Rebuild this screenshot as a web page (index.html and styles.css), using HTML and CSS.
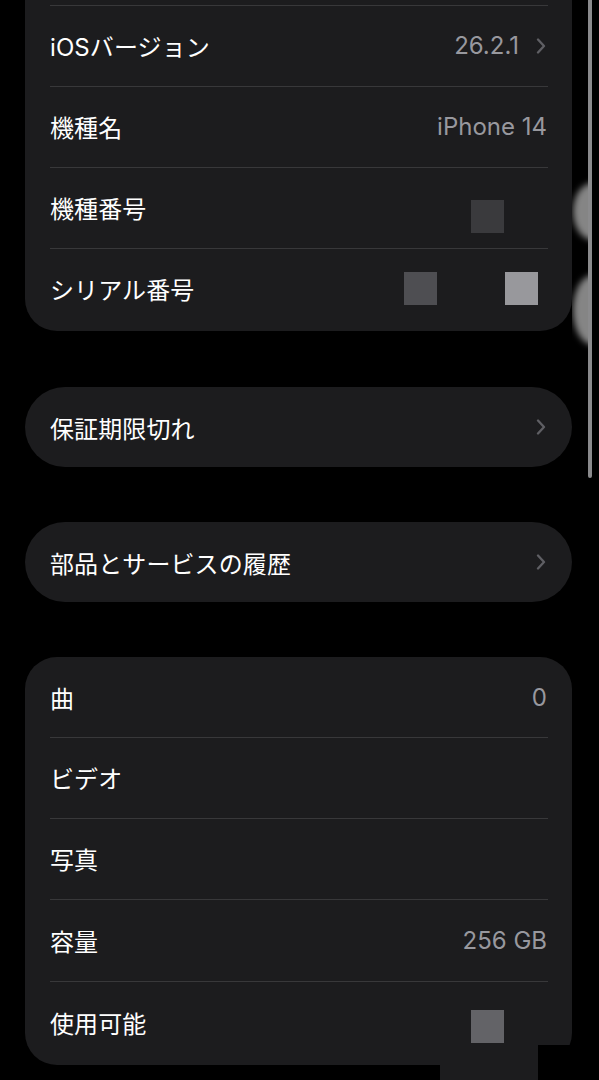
FILE: index.html
```html
<!DOCTYPE html>
<html lang="ja">
<head>
<meta charset="utf-8">
<link rel="stylesheet" href="styles.css">
</head>
<body>
<div class="page">
  <section class="card card-top">
    <div class="row r81 sep-top">
      <span class="label">iOSバージョン</span>
      <span class="value">26.2.1<svg class="chev" viewBox="0 0 10 16"><path d="M2 1.5 L8 8 L2 14.5"/></svg></span>
    </div>
    <div class="row r81 sep-top">
      <span class="label">機種名</span>
      <span class="value">iPhone 14</span>
    </div>
    <div class="row r81 sep-top">
      <span class="label">機種番号</span>
      <span class="value"><span class="px px-a"></span><span class="gap-px"></span></span>
    </div>
    <div class="row r81 sep-top">
      <span class="label">シリアル番号</span>
      <span class="value"><span class="px px-b"></span><span class="gap-mid"></span><span class="px px-c"></span><span class="gap-end"></span></span>
    </div>
  </section>

  <section class="card pill">
    <div class="row r80">
      <span class="label">保証期限切れ</span>
      <span class="value"><svg class="chev" viewBox="0 0 10 16"><path d="M2 1.5 L8 8 L2 14.5"/></svg></span>
    </div>
  </section>

  <section class="card pill">
    <div class="row r80">
      <span class="label">部品とサービスの履歴</span>
      <span class="value"><svg class="chev" viewBox="0 0 10 16"><path d="M2 1.5 L8 8 L2 14.5"/></svg></span>
    </div>
  </section>

  <section class="card card-bottom">
    <div class="row r80">
      <span class="label">曲</span>
      <span class="value">0</span>
    </div>
    <div class="row r805 sep-top">
      <span class="label">ビデオ</span>
      <span class="value"></span>
    </div>
    <div class="row r805 sep-top">
      <span class="label">写真</span>
      <span class="value"></span>
    </div>
    <div class="row r82 sep-top">
      <span class="label">容量</span>
      <span class="value">256 GB</span>
    </div>
    <div class="row r82 sep-top">
      <span class="label">使用可能</span>
      <span class="value"><span class="px px-d"></span><span class="gap-px"></span></span>
    </div>
    <div class="notch-cut"></div>
    <div class="notch-fill"></div>
  </section>
</div>
<div class="blob-clip">
  <div class="blob blob-1"></div>
  <div class="blob blob-2"></div>
</div>
<div class="scrollbar"></div>
</body>
</html>
```

FILE: styles.css
```css
html, body {
  margin: 0;
  padding: 0;
  background: #000;
}
body {
  width: 599px;
  height: 1080px;
  overflow: hidden;
  position: relative;
  font-family: "Inter", "Noto Sans CJK JP", sans-serif;
  -webkit-font-smoothing: antialiased;
}
.page {
  display: flex;
  flex-direction: column;
  padding-left: 25px;
  width: 547px;
  gap: 55px;
}
.card {
  background: #1c1c1e;
  position: relative;
}
.card-top {
  padding-top: 5px;
  padding-bottom: 2px;
  border-radius: 0 0 32px 32px;
  margin-bottom: 1px;
}
.pill {
  border-radius: 40px;
}
.card-bottom {
  border-radius: 32px;
  padding-bottom: 2px;
}
.row {
  display: flex;
  align-items: center;
  justify-content: space-between;
  padding: 0 25px;
  box-sizing: border-box;
  position: relative;
}
.r80 { height: 80px; }
.r81 { height: 81px; }
.r805 { height: 81px; }
.r82 { height: 82px; }
.sep-top::before {
  content: "";
  position: absolute;
  left: 25px;
  right: 24px;
  top: 0;
  height: 1px;
  background: #38383a;
}
.label {
  color: #fff;
  font-size: 24px;
  letter-spacing: 0.1px;
}
.value {
  color: #98989e;
  font-size: 24px;
  display: flex;
  align-items: center;
}
.chev {
  width: 10px;
  height: 16px;
  margin-left: 17px;
  margin-right: 1px;
}
.chev path {
  fill: none;
  stroke: #5f5f64;
  stroke-width: 2.3;
  stroke-linecap: round;
  stroke-linejoin: round;
}
.px {
  display: block;
  width: 33px;
  height: 33px;
}
.px-a { background: #3a3a3d; margin-top: 18px; }
.px-b { background: #4e4e52; }
.px-c { background: #98989c; }
.px-d { background: #636367; margin-top: 9px; }
.gap-px { display: block; width: 43px; }
.gap-mid { display: block; width: 68px; }
.gap-end { display: block; width: 9px; }
.notch-cut {
  position: absolute;
  right: 0;
  bottom: 0;
  width: 35px;
  height: 20px;
  background: #000;
}
.notch-fill {
  position: absolute;
  left: 415px;
  width: 98px;
  bottom: -16px;
  height: 36px;
  background: #1c1c1e;
}
.blob-clip {
  position: absolute;
  left: 572px;
  top: 170px;
  width: 17px;
  height: 190px;
  overflow: hidden;
}
.blob {
  position: absolute;
  left: 1px;
  background: #858585;
  border-radius: 50%;
  filter: blur(3px);
}
.blob-1 {
  top: 13px;
  width: 40px;
  height: 57px;
}
.blob-2 {
  top: 105px;
  width: 40px;
  height: 70px;
}
.scrollbar {
  position: absolute;
  left: 588px;
  top: -10px;
  width: 4px;
  height: 488px;
  border-radius: 2px;
  background: #8a8a8c;
}
```
